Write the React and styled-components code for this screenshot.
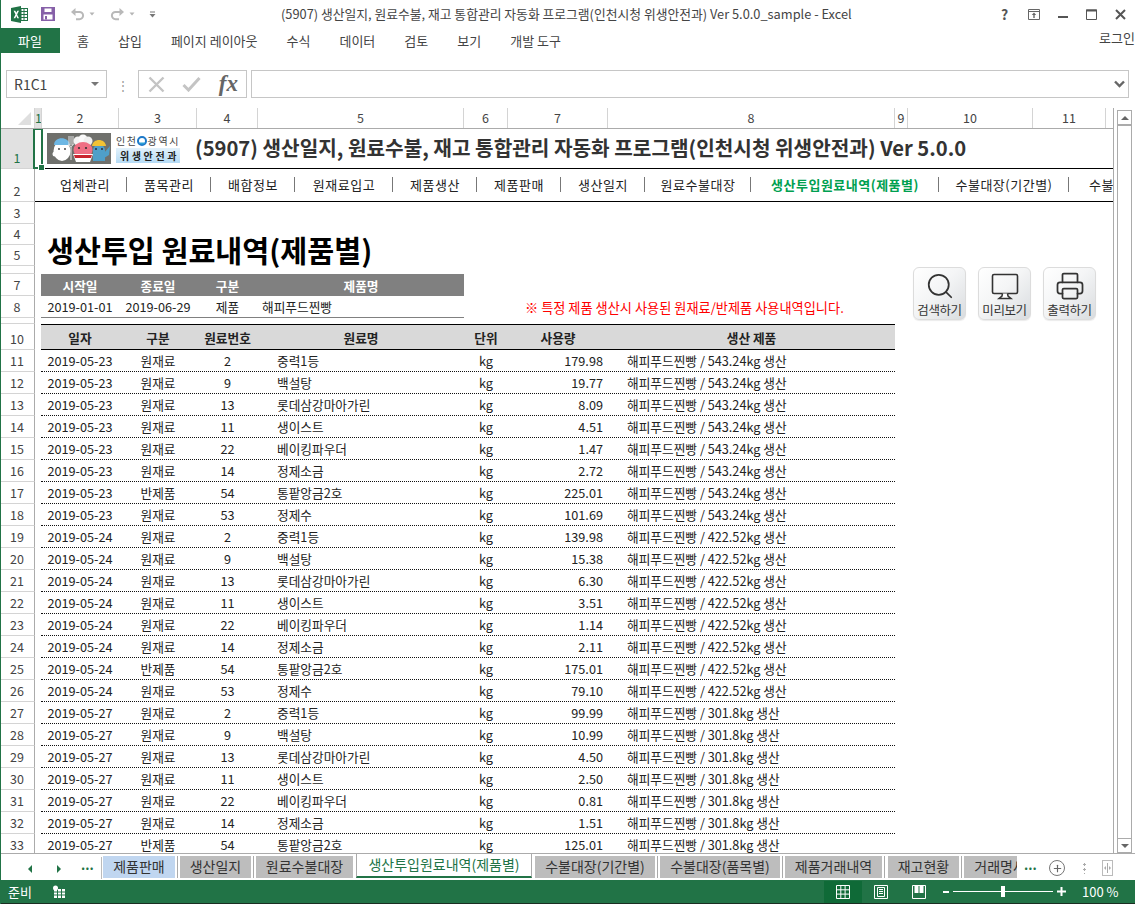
import React from 'react';
import styled, { createGlobalStyle } from 'styled-components';
import { Search, Printer, Plus } from 'lucide-react';

const GREEN = '#217346';
const FONT = '"Noto Sans CJK KR", "Noto Sans", sans-serif';

const COLS = [
  { n: 1, w: 7 }, { n: 2, w: 77 }, { n: 3, w: 78 }, { n: 4, w: 61 }, { n: 5, w: 206 }, { n: 6, w: 44 },
  { n: 7, w: 100 }, { n: 8, w: 287 }, { n: 9, w: 13 }, { n: 10, w: 125 }, { n: 11, w: 73 },
];

const MENU = [
  ['업체관리', 84], ['품목관리', 84], ['배합정보', 84], ['원재료입고', 98], ['제품생산', 84], ['제품판매', 84],
  ['생산일지', 84], ['원료수불대장', 106], ['생산투입원료내역(제품별)', 188], ['수불대장(기간별)', 130], ['수불대장', 90],
];

const RIBBON = ['홈', '삽입', '페이지 레이아웃', '수식', '데이터', '검토', '보기', '개발 도구'];

const MATERIALS = [
  ['원재료', 2, '중력1등'],
  ['원재료', 9, '백설탕'],
  ['원재료', 13, '롯데삼강마아가린'],
  ['원재료', 11, '생이스트'],
  ['원재료', 22, '베이킹파우더'],
  ['원재료', 14, '정제소금'],
  ['반제품', 54, '통팥앙금2호'],
  ['원재료', 53, '정제수'],
];

const BATCHES = [
  { date: '2019-05-23', made: '543.24kg', qty: ['179.98', '19.77', '8.09', '4.51', '1.47', '2.72', '225.01', '101.69'] },
  { date: '2019-05-24', made: '422.52kg', qty: ['139.98', '15.38', '6.30', '3.51', '1.14', '2.11', '175.01', '79.10'] },
  { date: '2019-05-27', made: '301.8kg', qty: ['99.99', '10.99', '4.50', '2.50', '0.81', '1.51', '125.01'] },
];

const ROWS = BATCHES.flatMap((b) =>
  b.qty.map((q, i) => ({ date: b.date, made: b.made, qty: q, kind: MATERIALS[i][0], no: MATERIALS[i][1], name: MATERIALS[i][2] }))
);

const TABS = [
  { label: '제품판매', w: 72, tone: 'blue', mr: 5 },
  { label: '생산일지', w: 71, mr: 5 },
  { label: '원료수불대장', w: 97, mr: 3, plain: true },
  { label: '생산투입원료내역(제품별)', w: 176, active: true, mr: 3 },
  { label: '수불대장(기간별)', w: 120, mr: 5 },
  { label: '수불대장(품목별)', w: 120, mr: 5 },
  { label: '제품거래내역', w: 97, mr: 6 },
  { label: '재고현황', w: 71, mr: 5 },
  { label: '거래명세서', w: 85, mr: 0 },
];

const Global = createGlobalStyle`
  html, body { margin: 0; padding: 0; background: #fff; }
  * { box-sizing: border-box; }
`;

const Window = styled.div`
  width: 1135px;
  height: 904px;
  display: flex;
  flex-direction: column;
  overflow: hidden;
  font-family: ${FONT};
  color: #222;
  position: relative;
  &::before {
    content: '';
    position: absolute;
    left: 0;
    top: 0;
    bottom: 0;
    width: 1px;
    background: ${GREEN};
    z-index: 3;
  }
`;

const TitleBar = styled.div`
  height: 28px;
  display: flex;
  align-items: center;
  position: relative;
  padding-left: 11px;
`;

const QuickSlot = styled.span`
  display: flex;
  align-items: center;
  margin-right: ${(p) => p.$mr || 0}px;
`;

const WindowTitle = styled.div`
  position: absolute;
  left: 281px;
  top: 5px;
  font-size: 12.8px;
  line-height: 18px;
  color: #444;
  white-space: nowrap;
`;

const WindowButtons = styled.div`
  position: absolute;
  right: 0;
  top: 4px;
  display: flex;
  align-items: center;
`;

const WindowButton = styled.span`
  width: 29px;
  height: 20px;
  display: flex;
  align-items: center;
  justify-content: center;
  color: #555;
  font-size: 14px;
  font-weight: 700;
`;

const RibbonTabs = styled.div`
  height: 25px;
  display: flex;
  align-items: stretch;
  position: relative;
`;

const FileTab = styled.div`
  width: 60px;
  background: ${GREEN};
  color: #fff;
  font-size: 13px;
  display: flex;
  align-items: center;
  justify-content: center;
  margin-right: 17px;
`;

const RibbonTab = styled.div`
  font-size: 13px;
  color: #444;
  display: flex;
  align-items: center;
  white-space: nowrap;
  margin-right: 29px;
`;

const Login = styled.div`
  position: absolute;
  right: 0;
  top: 0;
  font-size: 13px;
  color: #444;
  white-space: nowrap;
`;

const FormulaBar = styled.div`
  margin-top: 17px;
  height: 28px;
  display: flex;
  align-items: stretch;
  padding-left: 6px;
  padding-right: 6px;
`;

const NameBox = styled.div`
  width: 101px;
  border: 1px solid #c6c6c6;
  display: flex;
  align-items: center;
  justify-content: space-between;
  padding: 0 7px;
  font-size: 14px;
  color: #444;
`;

const Caret = styled.span`
  width: 0;
  height: 0;
  border-left: 4px solid transparent;
  border-right: 4px solid transparent;
  border-top: 4px solid #777;
`;

const Grip = styled.div`
  width: 31px;
  display: flex;
  align-items: center;
  justify-content: center;
  color: #999;
  font-size: 12px;
`;

const FxBox = styled.div`
  width: 109px;
  border: 1px solid #c6c6c6;
  display: flex;
  align-items: center;
  justify-content: space-between;
  padding: 0 8px 0 9px;
  margin-right: 4px;
`;

const Fx = styled.span`
  font-family: "Liberation Serif", serif;
  font-style: italic;
  font-weight: 700;
  font-size: 23px;
  color: #666;
`;

const FormulaInput = styled.div`
  flex: 1;
  border: 1px solid #c6c6c6;
  display: flex;
  align-items: center;
  justify-content: flex-end;
  padding-right: 3px;
`;

const SheetFrame = styled.div`
  margin-top: 10px;
  flex: 1;
  display: flex;
  min-height: 0;
`;

const SheetMain = styled.div`
  width: 1114px;
  display: flex;
  flex-direction: column;
  border-right: 1px solid #ababab;
  min-height: 0;
`;

const ColHeader = styled.div`
  height: 21px;
  display: flex;
  border-bottom: 1px solid #ababab;
  flex-shrink: 0;
`;

const Corner = styled.div`
  width: 35px;
  position: relative;
  border-right: 1px solid #d4d4d4;
  &::after {
    content: '';
    position: absolute;
    right: 3px;
    bottom: 3px;
    border-left: 13px solid transparent;
    border-bottom: 13px solid #dfdfdf;
  }
`;

const ColCell = styled.div`
  width: ${(p) => p.$w}px;
  flex-shrink: 0;
  font-size: 12.5px;
  line-height: 20px;
  text-align: center;
  color: ${(p) => (p.$on ? GREEN : '#444')};
  background: ${(p) => (p.$on ? '#e1e1e1' : 'transparent')};
  border-right: 1px solid #d4d4d4;
  overflow: hidden;
`;

const SheetBody = styled.div`
  flex: 1;
  min-height: 0;
  overflow: hidden;
  position: relative;
`;

const Row = styled.div`
  height: ${(p) => p.$h}px;
  display: flex;
`;

const RowHead = styled.div`
  width: 35px;
  flex-shrink: 0;
  border-right: 1px solid #ababab;
  border-bottom: 1px solid #d4d4d4;
  background: ${(p) => (p.$on ? '#e1e1e1' : '#fff')};
  color: ${(p) => (p.$on ? GREEN : '#444')};
  font-size: 12.5px;
  display: flex;
  align-items: flex-end;
  justify-content: center;
  padding-bottom: 1px;
  line-height: 18px;
  overflow: hidden;
`;

const Gutter = styled.div`
  width: 6px;
  flex-shrink: 0;
`;

const Strip = styled.div`
  flex: 1;
  min-width: 0;
  display: flex;
  align-items: center;
  overflow: hidden;
  padding-left: ${(p) => p.$pl || 0}px;
  border-bottom: 1px solid #000;
`;

const TitleText = styled.div`
  font-size: 20.2px;
  font-weight: 700;
  color: #333;
  white-space: nowrap;
  margin-left: 15px;
  margin-bottom: 3px;
`;

const LogoWrap = styled.div`
  display: flex;
  align-items: center;
  margin-left: 12px;
`;

const LogoCaption = styled.div`
  margin-left: 5px;
  width: 64px;
  display: flex;
  flex-direction: column;
  align-items: center;
`;

const CityName = styled.div`
  font-size: 10px;
  line-height: 14px;
  letter-spacing: 1.6px;
  color: #444;
  white-space: nowrap;
  display: flex;
  align-items: center;
`;

const Dept = styled.div`
  font-size: 10px;
  line-height: 15px;
  font-weight: 700;
  letter-spacing: 2.6px;
  color: #222;
  background: linear-gradient(#e2f1fb, #b5dbf5);
  padding: 0 1px 0 4px;
  white-space: nowrap;
`;

const CityMark = styled.svg`
  margin: 0 1px 0 -1px;
`;

const MenuItem = styled.div`
  width: ${(p) => p.$w}px;
  flex-shrink: 0;
  text-align: center;
  font-size: 13px;
  white-space: nowrap;
  position: relative;
  letter-spacing: 0.5px;
  margin-bottom: 2px;
  font-weight: ${(p) => (p.$on ? 700 : 400)};
  color: ${(p) => (p.$on ? '#00a050' : '#222')};
  &::after {
    content: '';
    position: absolute;
    right: 0;
    top: 2px;
    bottom: 2px;
    width: 1px;
    background: #777;
  }
`;

const Heading = styled.div`
  font-size: 29.3px;
  font-weight: 700;
  color: #000;
  margin-left: 6px;
  margin-bottom: 14px;
  white-space: nowrap;
  line-height: 30px;
`;

const DataGrid = styled.div`
  display: grid;
  grid-template-columns: 78px 78px 61px 206px 44px 100px 287px;
  width: 854px;
  height: 100%;
  align-items: center;
  background: ${(p) => p.$bg || 'transparent'};
  border-top: ${(p) => p.$top || 'none'};
  border-bottom: ${(p) => p.$bottom || 'none'};
`;

const Cell = styled.div`
  font-size: 12.7px;
  white-space: nowrap;
  color: ${(p) => p.$color || '#222'};
  font-weight: ${(p) => (p.$bold ? 700 : 400)};
  text-align: ${(p) => p.$align || 'center'};
  padding-left: ${(p) => p.$pl || 0}px;
  padding-right: ${(p) => p.$pr || 0}px;
`;

const SummaryGrid = styled.div`
  display: grid;
  grid-template-columns: 78px 78px 61px 206px;
  height: 100%;
  align-items: center;
  background: ${(p) => p.$bg || 'transparent'};
  border-bottom: ${(p) => p.$bottom || 'none'};
`;

const Note = styled.div`
  font-size: 13.2px;
  color: #f00;
  margin-left: 61px;
  white-space: nowrap;
`;

const RowFill = styled.div`
  display: flex;
  align-items: center;
  flex: 1;
  min-width: 0;
  height: 100%;
`;

const Actions = styled.div`
  position: absolute;
  left: 913px;
  top: 138px;
  display: flex;
  gap: 12px;
`;

const ActionButton = styled.div`
  width: 53px;
  height: 53px;
  border: 1px solid #dcdcdc;
  border-radius: 6px;
  background: linear-gradient(135deg, #fff 0%, #f4f5f6 45%, #d9dcdf 100%);
  display: flex;
  flex-direction: column;
  align-items: center;
  padding-top: 3px;
  font-size: 12.5px;
  letter-spacing: -0.4px;
  line-height: 17px;
  color: #333;
  white-space: nowrap;
  box-shadow: 0 1px 1px rgba(0, 0, 0, 0.08);
`;

const SelectedCell = styled.div`
  position: absolute;
  left: 33px;
  top: -1px;
  width: 10px;
  height: 41px;
  border: 2px solid ${GREEN};
  &::after {
    content: '';
    position: absolute;
    right: -3px;
    bottom: -3px;
    width: 5px;
    height: 5px;
    background: ${GREEN};
    outline: 1px solid #fff;
  }
`;

const ScrollBar = styled.div`
  width: 15px;
  margin-left: 3px;
  display: flex;
  flex-direction: column;
  padding-top: 2px;
`;

const ScrollButton = styled.div`
  height: 15px;
  border: 1px solid #ababab;
  background: #fff;
  display: flex;
  align-items: center;
  justify-content: center;
  flex-shrink: 0;
`;

const ScrollThumb = styled.div`
  flex: 1;
  border-left: 1px solid #ababab;
  border-right: 1px solid #ababab;
  border-top: 1px solid #ababab;
`;

const TriUp = styled.span`
  border-left: 4px solid transparent;
  border-right: 4px solid transparent;
  border-bottom: 4px solid #666;
`;

const TriDown = styled.span`
  border-left: 4px solid transparent;
  border-right: 4px solid transparent;
  border-top: 4px solid #666;
`;

const TabStrip = styled.div`
  height: 27px;
  display: flex;
  align-items: flex-start;
  background: #fff;
  position: relative;
  border-top: 1px solid #ababab;
`;

const TabNav = styled.div`
  width: 102px;
  height: 22px;
  flex-shrink: 0;
  border-right: 1px solid #bbb;
  margin-top: 3px;
  position: relative;
`;

const NavTri = styled.span`
  position: absolute;
  left: ${(p) => p.$x}px;
  top: 8px;
  border-top: 4px solid transparent;
  border-bottom: 4px solid transparent;
  ${(p) => (p.$right ? `border-left: 4px solid ${GREEN};` : `border-right: 4px solid ${GREEN};`)}
`;

const Dots = styled.span`
  position: absolute;
  left: ${(p) => p.$x}px;
  top: ${(p) => p.$y}px;
  color: ${GREEN};
  font-size: 13px;
  font-weight: 700;
  line-height: 18px;
`;

const TabList = styled.div`
  width: 915px;
  display: flex;
  overflow: hidden;
  padding-left: 1px;
`;

const SheetTab = styled.div`
  width: ${(p) => p.$w}px;
  flex-shrink: 0;
  height: ${(p) => (p.$active ? 24 : 22)}px;
  margin-top: ${(p) => (p.$active ? 0 : 2)}px;
  margin-right: ${(p) => p.$mr}px;
  font-size: 14px;
  line-height: 20px;
  text-align: center;
  white-space: nowrap;
  overflow: hidden;
  color: ${(p) => (p.$active ? GREEN : '#333')};
  background: ${(p) => (p.$active ? '#fff' : p.$tone === 'blue' ? '#c0d6f0' : '#bdbdbd')};
  border-left: ${(p) => (p.$active ? '1px solid #ababab' : 'none')};
  border-right: ${(p) => (p.$active ? '1px solid #ababab' : 'none')};
  border-bottom: ${(p) => (p.$active ? `2px solid ${GREEN}` : 'none')};
  box-shadow: ${(p) => (p.$active || p.$plain ? 'none' : '2px 0 0 #fff, 3px 0 0 #aaa')};
`;

const AddSheet = styled.div`
  position: absolute;
  left: 1049px;
  top: 6px;
  width: 16px;
  height: 16px;
  border-radius: 50%;
  border: 1.5px solid #777;
  display: flex;
  align-items: center;
  justify-content: center;
  color: #666;
`;

const SplitGrip = styled.div`
  position: absolute;
  left: 1102px;
  top: 6px;
  width: 11px;
  height: 16px;
  border: 1px solid #bbb;
  display: flex;
  align-items: center;
  justify-content: center;
  color: #999;
`;

const VGrip = styled.span`
  position: absolute;
  left: 1083px;
  top: 8px;
  width: 3px;
  height: 12px;
  background: radial-gradient(circle, #aaa 1px, transparent 1.2px) 0 0 / 3px 5px repeat-y;
`;

const StatusBar = styled.div`
  height: 24px;
  background: ${GREEN};
  border-bottom: 1px solid #1a2e22;
  color: #fff;
  display: flex;
  align-items: center;
  padding-left: 8px;
  font-size: 13px;
  position: relative;
`;

const ReadySlot = styled.span`
  margin-left: 20px;
  display: flex;
`;

const StatusRight = styled.div`
  position: absolute;
  left: 824px;
  top: 1px;
  display: flex;
  align-items: center;
  height: 21px;
`;

const ViewButton = styled.div`
  width: 38px;
  height: 22px;
  display: flex;
  align-items: center;
  justify-content: center;
  background: ${(p) => (p.$on ? '#0f6a37' : 'transparent')};
`;

const Zoom = styled.div`
  margin-left: 5px;
  display: flex;
  align-items: center;
  gap: 4px;
`;

const ZoomMinus = styled.span`
  width: 6px;
  height: 2px;
  background: #fff;
`;

const Slider = styled.div`
  width: 100px;
  height: 1px;
  background: #fff;
  position: relative;
  &::after {
    content: '';
    position: absolute;
    left: 48px;
    top: -5px;
    width: 4px;
    height: 11px;
    background: #fff;
  }
`;

const ZoomPct = styled.span`
  margin-left: 16px;
  font-size: 13px;
  white-space: nowrap;
`;

const FlipSvg = styled.svg`
  transform: ${(p) => (p.$flip ? 'scaleX(-1)' : 'none')};
`;

const ExcelLogo = () => (
  <svg width="17" height="17" viewBox="0 0 17 17">
    <rect x="7" y="2.500" width="9.500" height="12" fill="#fff" stroke="#217346" />
    <path d="M10 2.500v12M13 2.500v12M7 5.500h9.500M7 8.500h9.500M7 11.500h9.500" stroke="#217346" strokeWidth="1" fill="none" />
    <path d="M0 2l10-2v17L0 15z" fill="#217346" />
    <path d="M2.600 4.800h1.700l1 2 1-2H8L6.100 8.500 8 12.200H6.300l-1-2.100-1 2.100H2.600l1.900-3.700z" fill="#fff" />
  </svg>
);

const SaveIcon = () => (
  <svg width="14" height="14" viewBox="0 0 14 14">
    <rect width="14" height="14" fill="#8660a8" />
    <rect x="3.500" y="1.500" width="7" height="3.500" fill="#fff" />
    <rect x="2.500" y="7.500" width="9" height="5" fill="#fff" />
    <rect x="4" y="9" width="2" height="3.500" fill="#8660a8" />
  </svg>
);

const UndoIcon = ({ flip }) => (
  <FlipSvg $flip={flip} width="15" height="14" viewBox="0 0 15 14">
    <path d="M3 5h6.500a3.600 3.600 0 0 1 0 7.200H6" fill="none" stroke="#b9b9b9" strokeWidth="2" />
    <path d="M5.500 1L1 5l4.500 4z" fill="#b9b9b9" />
  </FlipSvg>
);

const MiniCaret = () => (
  <svg width="6" height="4" viewBox="0 0 6 4">
    <path d="M0.500 0.500h5L3 3.500z" fill="#b5b5b5" />
  </svg>
);

const CustomizeCaret = () => (
  <svg width="7" height="7" viewBox="0 0 7 7">
    <path d="M1 1h5" stroke="#777" />
    <path d="M0.500 3h6L3.500 6.500z" fill="#777" />
  </svg>
);

const RibbonDisplayIcon = () => (
  <svg width="12" height="11" viewBox="0 0 12 11">
    <path d="M.5.500h11v10H.5zM.5 2.500h11" fill="none" stroke="#666" />
    <path d="M6 3.500L3.800 6h1.500v3h1.400V6h1.500z" fill="#666" />
  </svg>
);

const MinimizeIcon = () => (
  <svg width="10" height="10" viewBox="0 0 10 10"><path d="M0 8h10" stroke="#555" strokeWidth="2" /></svg>
);

const MaximizeIcon = () => (
  <svg width="11" height="11" viewBox="0 0 11 11">
    <path d="M.5 1h10v9.500H.5z" fill="none" stroke="#555" />
    <path d="M0 1.500h11" stroke="#555" strokeWidth="2" />
  </svg>
);

const CloseIcon = () => (
  <svg width="11" height="11" viewBox="0 0 11 11">
    <path d="M1 1l9 9M10 1l-9 9" stroke="#555" strokeWidth="2" />
  </svg>
);

const MonitorIcon = () => (
  <svg width="30" height="30" viewBox="0 0 30 30">
    <path d="M4 3.500h22a1.500 1.500 0 0 1 1.500 1.500v16a1.500 1.500 0 0 1-1.500 1.500H4A1.500 1.500 0 0 1 2.500 21V5A1.500 1.500 0 0 1 4 3.500z" fill="none" stroke="#333" strokeWidth="1.600" />
    <path d="M12.500 22.500l-.5 2.500-3 2.500h12l-3-2.500-.5-2.500" fill="#fff" stroke="#333" strokeWidth="1.500" />
  </svg>
);

const Mascots = () => (
  <svg width="64" height="31" viewBox="0 0 64 31">
    <rect width="64" height="31" fill="#6f706c" />
    <ellipse cx="15" cy="18" rx="8.500" ry="10" fill="#fff" />
    <path d="M7 12c0-9 15-9 16 0z" fill="#6db7e4" />
    <circle cx="8" cy="21" r="2.500" fill="#fff" />
    <circle cx="12" cy="16" r=".9" fill="#333" />
    <circle cx="18" cy="16" r=".9" fill="#333" />
    <path d="M22 3v9M24 3v9M26 3v9M22 11c0 3 4 3 4 0M24 13v14" stroke="#e4e4e4" strokeWidth="1" fill="none" />
    <circle cx="31" cy="8" r="4.500" fill="#f4f4f4" />
    <circle cx="36" cy="6" r="4.500" fill="#fafafa" />
    <circle cx="41" cy="8" r="4.500" fill="#efefef" />
    <ellipse cx="36" cy="17" rx="9.500" ry="8" fill="#ef6f84" />
    <path d="M26 21h20l-3 8H29z" fill="#fff" />
    <path d="M27 22h18l-1 3H28z" fill="#c9252f" />
    <circle cx="32" cy="15" r="1.100" fill="#333" />
    <circle cx="39" cy="15" r="1.100" fill="#333" />
    <path d="M46 18c0-9 12-9 12 0v10H46z" fill="#4f9fc9" />
    <path d="M45 13c1-8 13-8 14 0z" fill="#f2c233" />
    <path d="M57 20l6-7-1 9-5 3z" fill="#4f9fc9" />
    <circle cx="49" cy="16" r=".9" fill="#223" />
    <circle cx="55" cy="16" r=".9" fill="#223" />
  </svg>
);

const ReadyIcon = () => (
  <svg width="14" height="14" viewBox="0 0 14 14">
    <rect x="2" y="4" width="11" height="9" fill="#fff" />
    <path d="M2 7h11M2 10h11M5.500 4v9M9.500 4v9" stroke={GREEN} strokeWidth="1" />
    <circle cx="3.500" cy="3" r="2.500" fill="#fff" />
  </svg>
);

const GridViewIcon = () => (
  <svg width="14" height="14" viewBox="0 0 14 14">
    <path d="M.5.500h13v13H.5zM.5 4.800h13M.5 9.100h13M4.800.5v13M9.100.5v13" fill="none" stroke="#fff" />
  </svg>
);

const PageViewIcon = () => (
  <svg width="14" height="14" viewBox="0 0 14 14">
    <path d="M.5.500h13v13H.5z" fill="none" stroke="#fff" />
    <path d="M3.500 2.500v9h7v-9zM5 4.500h4M5 6.500h4M5 8.500h4" fill="none" stroke="#fff" />
  </svg>
);

const BreakViewIcon = () => (
  <svg width="14" height="14" viewBox="0 0 14 14">
    <path d="M.5.500h13v13H.5z" fill="none" stroke="#fff" />
    <path d="M2.500 1h4v7h-4zM7.500 1h4v7h-4z" fill="#fff" />
  </svg>
);

const CrossIcon = () => (
  <svg width="17" height="17" viewBox="0 0 17 17">
    <path d="M1.500 1.500l14 14M15.500 1.500l-14 14" stroke="#c4c4c4" strokeWidth="2.400" />
  </svg>
);

const CheckIcon = () => (
  <svg width="19" height="16" viewBox="0 0 19 16">
    <path d="M1.500 9l5 5L17.500 2" fill="none" stroke="#c4c4c4" strokeWidth="3" />
  </svg>
);

const Chevron = () => (
  <svg width="11" height="8" viewBox="0 0 11 8">
    <path d="M1 1.500l4.500 4.500L10 1.500" fill="none" stroke="#666" strokeWidth="2.400" />
  </svg>
);

const SplitMark = () => (
  <svg width="7" height="10" viewBox="0 0 7 10">
    <path d="M3.500 0v10" stroke="#aaa" />
    <path d="M2 3L0 5l2 2zM5 3l2 2-2 2z" fill="#aaa" />
  </svg>
);

const ZoomPlus = () => (
  <svg width="9" height="9" viewBox="0 0 9 9">
    <path d="M0 4.500h9M4.500 0v9" stroke="#fff" strokeWidth="2" />
  </svg>
);

const App = () => (
  <Window>
    <Global />
    <TitleBar>
      <QuickSlot $mr={13}><ExcelLogo /></QuickSlot>
      <QuickSlot $mr={15}><SaveIcon /></QuickSlot>
      <QuickSlot $mr={4}><UndoIcon /></QuickSlot>
      <QuickSlot $mr={15}><MiniCaret /></QuickSlot>
      <QuickSlot $mr={4}><UndoIcon flip /></QuickSlot>
      <QuickSlot $mr={14}><MiniCaret /></QuickSlot>
      <CustomizeCaret />
      <WindowTitle>(5907) 생산일지, 원료수불, 재고 통합관리 자동화 프로그램(인천시청 위생안전과) Ver 5.0.0_sample - Excel</WindowTitle>
      <WindowButtons>
        <WindowButton>?</WindowButton>
        <WindowButton><RibbonDisplayIcon /></WindowButton>
        <WindowButton><MinimizeIcon /></WindowButton>
        <WindowButton><MaximizeIcon /></WindowButton>
        <WindowButton><CloseIcon /></WindowButton>
      </WindowButtons>
    </TitleBar>
    <RibbonTabs>
      <FileTab>파일</FileTab>
      {RIBBON.map((t) => <RibbonTab key={t}>{t}</RibbonTab>)}
      <Login>로그인</Login>
    </RibbonTabs>
    <FormulaBar>
      <NameBox>R1C1<Caret /></NameBox>
      <Grip>⋮</Grip>
      <FxBox><CrossIcon /><CheckIcon /><Fx>fx</Fx></FxBox>
      <FormulaInput><Chevron /></FormulaInput>
    </FormulaBar>
    <SheetFrame>
      <SheetMain>
        <ColHeader>
          <Corner />
          {COLS.map((c) => <ColCell key={c.n} $w={c.w} $on={c.n === 1}>{c.n}</ColCell>)}
        </ColHeader>
        <SheetBody>
          <Row $h={40}>
            <RowHead $on>1</RowHead>
            <Strip>
              <LogoWrap>
                <Mascots />
                <LogoCaption>
                  <CityName>
                    인천
                    <CityMark width="10" height="10" viewBox="0 0 10 10">
                      <circle cx="5" cy="5" r="4" fill="none" stroke="#1c78c8" strokeWidth="2" />
                      <path d="M1.500 6.500a4 4 0 0 0 7 0z" fill="#2aa0d8" />
                    </CityMark>
                    광역시
                  </CityName>
                  <Dept>위생안전과</Dept>
                </LogoCaption>
              </LogoWrap>
              <TitleText>(5907) 생산일지, 원료수불, 재고 통합관리 자동화 프로그램(인천시청 위생안전과) Ver 5.0.0</TitleText>
            </Strip>
          </Row>
          <Row $h={33}>
            <RowHead>2</RowHead>
            <Strip $pl={8}>
              {MENU.map(([label, w]) => (
                <MenuItem key={label} $w={w} $on={label.includes('생산투입')}>{label}</MenuItem>
              ))}
            </Strip>
          </Row>
          <Row $h={22}><RowHead>3</RowHead></Row>
          <Row $h={21}><RowHead>4</RowHead></Row>
          <Row $h={21}>
            <RowHead>5</RowHead>
            <Gutter />
            <RowFill><Heading>생산투입 원료내역(제품별)</Heading></RowFill>
          </Row>
          <Row $h={8}><RowHead /></Row>
          <Row $h={22}>
            <RowHead>7</RowHead>
            <Gutter />
            <SummaryGrid $bg="#808080">
              {['시작일', '종료일', '구분', '제품명'].map((t) => <Cell key={t} $color="#fff" $bold>{t}</Cell>)}
            </SummaryGrid>
          </Row>
          <Row $h={22}>
            <RowHead>8</RowHead>
            <Gutter />
            <SummaryGrid $bottom="1px solid #808080">
              <Cell>2019-01-01</Cell>
              <Cell>2019-06-29</Cell>
              <Cell>제품</Cell>
              <Cell $align="left" $pl={4}>해피푸드찐빵</Cell>
            </SummaryGrid>
            <RowFill><Note>※ 특정 제품 생산시 사용된 원재료/반제품 사용내역입니다.</Note></RowFill>
          </Row>
          <Row $h={6}><RowHead /></Row>
          <Row $h={26}>
            <RowHead>10</RowHead>
            <Gutter />
            <DataGrid $bg="#d9d9d9" $top="1px solid #000" $bottom="1px solid #000">
              <Cell $bold>일자</Cell>
              <Cell $bold>구분</Cell>
              <Cell $bold>원료번호</Cell>
              <Cell $bold>원료명</Cell>
              <Cell $bold>단위</Cell>
              <Cell $bold>사용량</Cell>
              <Cell $bold>생산 제품</Cell>
            </DataGrid>
          </Row>
          {ROWS.map((r, i) => (
            <Row $h={22} key={i}>
              <RowHead>{i + 11}</RowHead>
              <Gutter />
              <DataGrid $bottom="1px dotted #111">
                <Cell>{r.date}</Cell>
                <Cell>{r.kind}</Cell>
                <Cell>{r.no}</Cell>
                <Cell $align="left" $pl={19}>{r.name}</Cell>
                <Cell>kg</Cell>
                <Cell $align="right" $pr={5}>{r.qty}</Cell>
                <Cell $align="left" $pl={19}>해피푸드찐빵 / {r.made} 생산</Cell>
              </DataGrid>
            </Row>
          ))}
          <SelectedCell />
          <Actions>
            <ActionButton><Search size={30} strokeWidth={1.4} color="#333" />검색하기</ActionButton>
            <ActionButton><MonitorIcon />미리보기</ActionButton>
            <ActionButton><Printer size={30} strokeWidth={1.4} color="#333" />출력하기</ActionButton>
          </Actions>
        </SheetBody>
      </SheetMain>
      <ScrollBar>
        <ScrollButton><TriUp /></ScrollButton>
        <ScrollThumb />
        <ScrollButton><TriDown /></ScrollButton>
      </ScrollBar>
    </SheetFrame>
    <TabStrip>
      <TabNav>
        <NavTri $x={28} />
        <NavTri $x={57} $right />
        <Dots $x={81} $y={-1}>...</Dots>
      </TabNav>
      <TabList>
        {TABS.map((t) => (
          <SheetTab key={t.label} $w={t.w} $mr={t.mr} $active={t.active} $tone={t.tone} $plain={t.plain}>{t.label}</SheetTab>
        ))}
      </TabList>
      <Dots $x={1024} $y={2}>...</Dots>
      <AddSheet><Plus size={11} strokeWidth={2.5} /></AddSheet>
      <VGrip />
      <SplitGrip><SplitMark /></SplitGrip>
    </TabStrip>
    <StatusBar>
      준비
      <ReadySlot><ReadyIcon /></ReadySlot>
      <StatusRight>
        <ViewButton $on><GridViewIcon /></ViewButton>
        <ViewButton><PageViewIcon /></ViewButton>
        <ViewButton><BreakViewIcon /></ViewButton>
        <Zoom><ZoomMinus /><Slider /><ZoomPlus /></Zoom>
        <ZoomPct>100 %</ZoomPct>
      </StatusRight>
    </StatusBar>
  </Window>
);

export default App;
